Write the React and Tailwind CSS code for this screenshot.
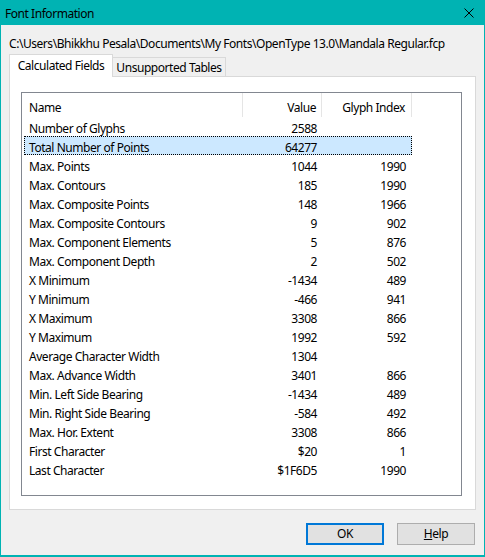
import React from "react";

const rows = [
  ["Number of Glyphs", "2588", ""],
  ["Total Number of Points", "64277", ""],
  ["Max. Points", "1044", "1990"],
  ["Max. Contours", "185", "1990"],
  ["Max. Composite Points", "148", "1966"],
  ["Max. Composite Contours", "9", "902"],
  ["Max. Component Elements", "5", "876"],
  ["Max. Component Depth", "2", "502"],
  ["X Minimum", "-1434", "489"],
  ["Y Minimum", "-466", "941"],
  ["X Maximum", "3308", "866"],
  ["Y Maximum", "1992", "592"],
  ["Average Character Width", "1304", ""],
  ["Max. Advance Width", "3401", "866"],
  ["Min. Left Side Bearing", "-1434", "489"],
  ["Min. Right Side Bearing", "-584", "492"],
  ["Max. Hor. Extent", "3308", "866"],
  ["First Character", "$20", "1"],
  ["Last Character", "$1F6D5", "1990"],
];

export default function App() {
  return (
    <div
      className="w-[485px] h-[557px] bg-[#00b3b3] flex flex-col px-[1px] pb-[2px] text-[12px] leading-[16px] tracking-[-0.45px] text-black"
      style={{ fontFamily: '"Noto Sans", "Open Sans", sans-serif' }}
    >
      {/* Title bar */}
      <div className="h-[25px] flex items-center justify-between pl-[4px] pr-[10px] pt-[2px] shrink-0">
        <span>Font Information</span>
        <svg width="10" height="10" viewBox="0 0 10 10" className="block -mt-[2px]">
          <path d="M0.5 0.5 L9.5 9.5 M9.5 0.5 L0.5 9.5" stroke="#000" strokeWidth="1" />
        </svg>
      </div>

      {/* Body */}
      <div className="flex-1 bg-[#f0f0f0] flex flex-col px-[8px]">
        <div className="mt-[11px] h-[16px] whitespace-nowrap">
          C:\Users\Bhikkhu Pesala\Documents\My Fonts\OpenType 13.0\Mandala Regular.fcp
        </div>

        {/* Tabs */}
        <div className="mt-[2px] flex items-end h-[22px] relative z-10">
          <div className="h-[23px] w-[104px] bg-white border border-b-0 border-[#d9d9d9] flex items-start justify-center pt-[3px] -mb-[1px] whitespace-nowrap">
            Calculated Fields
          </div>
          <div className="h-[19px] w-[113px] bg-[#f0f0f0] border border-l-0 border-b-0 border-[#d9d9d9] flex items-start justify-center pt-[2px] whitespace-nowrap">
            Unsupported Tables
          </div>
        </div>

        {/* Panel */}
        <div className="h-[434px] bg-white border border-[#d9d9d9] pt-[15px] pl-[11px] pr-[13px]">
          <div className="h-[404px] border border-[#828790] bg-white">
            {/* Header */}
            <div className="flex h-[24px] items-stretch">
              <div className="w-[221px] border-r border-[#e5e5e5] flex items-start pt-[7px] pl-[7px]">Name</div>
              <div className="w-[79px] border-r border-[#e5e5e5] flex items-start pt-[7px] justify-end pr-[5px]">Value</div>
              <div className="w-[90px] border-r border-[#e5e5e5] flex items-start pt-[7px] justify-end pr-[6px]">Glyph Index</div>
            </div>
            {/* Rows */}
            <div className="flex flex-col pl-[2px]">
              {rows.map(([name, val, idx], i) => (
                <div
                  key={name}
                  className={
                    "flex h-[19px] w-[388px] items-start pt-[4px] " +
                    (i === 1 ? "bg-[#cce8ff] outline outline-1 outline-dotted outline-black -outline-offset-1" : "")
                  }
                >
                  <div className="w-[219px] pl-[5px] whitespace-nowrap">{name}</div>
                  <div className="w-[79px] text-right pr-[5px]">{val}</div>
                  <div className="w-[90px] text-right pr-[6px]">{idx}</div>
                </div>
              ))}
            </div>
          </div>
        </div>

        {/* Buttons */}
        <div className="mt-[13px] flex justify-end gap-[13px] pr-[1px]">
          <div className="w-[78px] h-[22px] bg-[#e1e1e1] border-2 border-[#0078d7] flex items-center justify-center">
            OK
          </div>
          <div className="w-[78px] h-[22px] bg-[#e1e1e1] border border-[#adadad] flex items-center justify-center">
            <span><span className="underline">H</span>elp</span>
          </div>
        </div>
      </div>
    </div>
  );
}
